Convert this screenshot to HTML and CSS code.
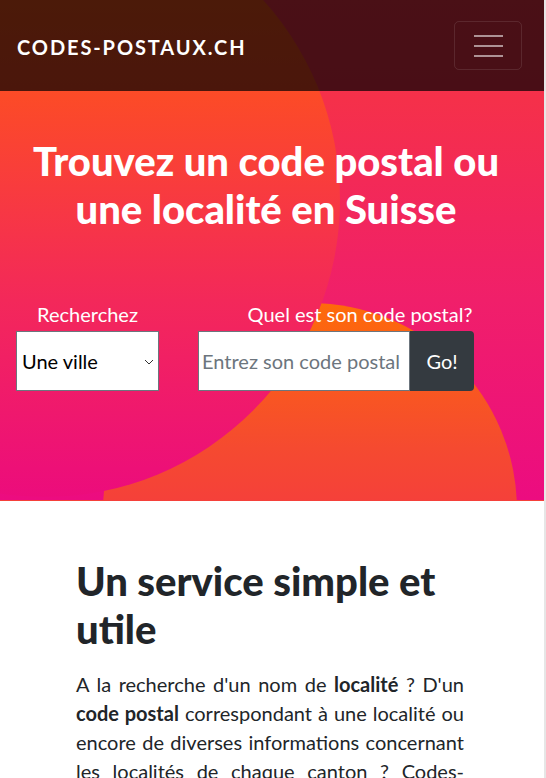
FILE: index.html
```html
<!DOCTYPE html>
<html lang="fr">
<head>
<meta charset="utf-8">
<title>Codes-postaux.ch</title>
<link rel="stylesheet" href="styles.css">
</head>
<body>
<div class="page">
  <header class="masthead">
    <div class="bg">
      <div class="layer pink"></div>
      <div class="layer orange-disc"></div>
      <div class="layer big-disc"></div>
    </div>
    <nav class="navbar">
      <a class="brand" href="#">CODES-POSTAUX.CH</a>
      <button class="toggler" type="button" aria-label="Menu">
        <span class="bar"></span><span class="bar"></span><span class="bar"></span>
      </button>
    </nav>
    <section class="hero">
      <h1 class="hero-title">Trouvez un code postal ou une localité en Suisse</h1>
      <form class="search">
        <div class="field field-type">
          <label class="field-label" for="type">Recherchez</label>
          <div class="select-wrap">
            <select id="type" class="select">
              <option>Une ville</option>
            </select>
            <svg class="chev" width="10" height="6" viewBox="0 0 10 6"><path d="M1 1l4 4 4-4" fill="none" stroke="#333" stroke-width="1"/></svg>
          </div>
        </div>
        <div class="field field-query">
          <label class="field-label" for="q">Quel est son code postal?</label>
          <div class="input-group">
            <input id="q" class="input" type="text" placeholder="Entrez son code postal">
            <button class="go" type="button">Go!</button>
          </div>
        </div>
      </form>
    </section>
  </header>
  <main class="content">
    <h2 class="section-title">Un service simple et utile</h2>
    <p class="lead">A la recherche d'un nom de <strong>localité</strong> ? D'un <strong>code postal</strong> correspondant à une localité ou encore de diverses informations concernant les localités de chaque canton ? Codes-postaux.ch vous permet de trouver rapidement et gratuitement toutes ces informations.</p>
  </main>
</div>
</body>
</html>
```
FILE: styles.css
```css
* { box-sizing: border-box; }
html, body { margin: 0; padding: 0; background: #fff; }
body {
  font-family: Lato, "Open Sans", Arial, sans-serif;
  color: #212529;
}
.page {
  border-right: 2px solid #e6e6e6;
  min-height: 778px;
  overflow: hidden;
}
.masthead {
  position: relative;
  height: 501px;
  overflow: hidden;
  background: linear-gradient(180deg, #fc4a28 0%, #f5403a 100%);
}
.bg { position: absolute; inset: 0; }
.layer { position: absolute; }
.pink {
  left: 0; top: 0; right: 0; height: 500px;
  background: linear-gradient(180deg, #f7364a 0%, #f5304a 20%, #f01f6a 60%, #ec0c80 100%);
}
.orange-disc {
  left: 103px; top: 303px; width: 414px; height: 414px; border-radius: 50%;
  background: linear-gradient(180deg, #fe6a0a 0%, #f54a30 35%, #f5403a 48%, #f5403a 100%);
}
.big-disc {
  left: -250px; top: -97px; width: 590px; height: 594px; border-radius: 50%;
  background: linear-gradient(180deg, #fd6616 0%, #fc4a28 33%, #f3285a 67%, #ec0c7c 100%);
}
.navbar {
  position: relative;
  height: 91px;
  background: rgba(0, 0, 0, 0.7);
  display: flex;
  align-items: center;
  justify-content: space-between;
  padding: 0 22px 0 17px;
}
.brand {
  color: #fff;
  text-decoration: none;
  font-weight: 700;
  font-size: 20px;
  letter-spacing: 1.9px;
  margin-top: 2px;
}
.toggler {
  width: 68px; height: 49px;
  background: transparent;
  border: 1px solid rgba(255, 255, 255, 0.1);
  border-radius: 5px;
  display: flex; flex-direction: column; align-items: center; justify-content: center;
  gap: 8px;
  padding: 0;
}
.bar { display: block; width: 29px; height: 2px; background: rgba(255, 255, 255, 0.55); }
.hero { position: relative; padding: 46px 22px 0 16px; }
.hero-title {
  margin: 0 0 69px 0;
  color: #fff;
  text-align: center;
  font-size: 40px;
  line-height: 48px;
  font-weight: 900;
  padding: 0 20px 0 14px;
}
.search {
  display: grid;
  grid-template-columns: 143px 1fr;
  column-gap: 39px;
}
.field { display: flex; flex-direction: column; align-items: center; }
.field-query { align-items: flex-start; }
.field-query .field-label { align-self: center; }
.field-label { color: #fff; font-size: 20px; line-height: 24px; margin-bottom: 5px; }
.select-wrap { position: relative; width: 143px; }
.select {
  appearance: none; -webkit-appearance: none;
  width: 143px; height: 60px;
  border: 1px solid #6c757d;
  background: #fff;
  border-radius: 0;
  font-family: inherit; font-size: 20px; color: #000;
  padding: 0 0 0 5px;
}
.chev { position: absolute; right: 5px; top: 28px; pointer-events: none; }
.input-group { display: flex; }
.input {
  width: 212px; height: 60px;
  border: 1px solid #6c757d;
  border-radius: 0;
  font-family: inherit; font-size: 20px; color: #495057;
  padding: 0 0 0 3px;
}
.input::placeholder { color: #6c757d; }
.go {
  width: 64px; height: 60px;
  background: #343a40; color: #fff;
  border: none; border-radius: 0 4px 4px 0;
  font-family: inherit; font-size: 20px;
}
.content { padding: 56px 80px 0 76px; }
.section-title {
  margin: 0 0 17px 0;
  font-size: 40px;
  line-height: 48px;
  font-weight: 900;
  color: #212529;
}
.lead {
  margin: 0;
  font-size: 20px;
  line-height: 29px;
  text-align: justify;
  color: #212529;
}
.lead strong { font-weight: 700; }
```
